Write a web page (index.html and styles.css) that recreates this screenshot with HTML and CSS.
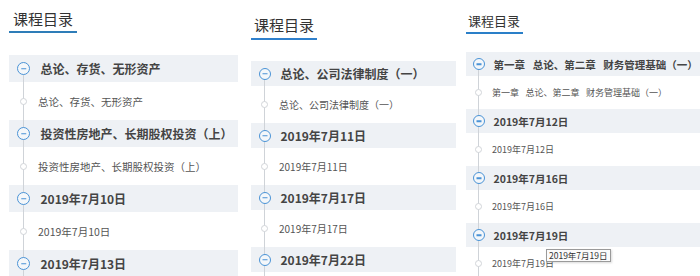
FILE: index.html
```html
<!DOCTYPE html>
<html lang="zh-CN">
<head>
    <meta charset="UTF-8">
    <meta name="viewport" content="width=device-width, initial-scale=1.0">
    <title>课程目录</title>
    <link rel="stylesheet" href="styles.css">
</head>
<body>
    <div class="page">
        <section class="toc toc-a">
            <h2 class="toc-title">课程目录</h2>
            <ul class="toc-list">
                <li class="group">
                    <div class="chapter"><span class="chapter-icon"></span><span>总论、存货、无形资产</span></div>
                    <div class="lesson"><span class="lesson-dot"></span><span>总论、存货、无形资产</span></div>
                </li>
                <li class="group">
                    <div class="chapter"><span class="chapter-icon"></span><span>投资性房地产、长期股权投资（上）</span></div>
                    <div class="lesson"><span class="lesson-dot"></span><span>投资性房地产、长期股权投资（上）</span></div>
                </li>
                <li class="group">
                    <div class="chapter"><span class="chapter-icon"></span><span>2019年7月10日</span></div>
                    <div class="lesson"><span class="lesson-dot"></span><span>2019年7月10日</span></div>
                </li>
                <li class="group">
                    <div class="chapter"><span class="chapter-icon"></span><span>2019年7月13日</span></div>
                    <div class="lesson"><span class="lesson-dot"></span><span>2019年7月13日</span></div>
                </li>
            </ul>
        </section>

        <section class="toc toc-b">
            <h2 class="toc-title">课程目录</h2>
            <ul class="toc-list">
                <li class="group">
                    <div class="chapter"><span class="chapter-icon"></span><span>总论、公司法律制度（一）</span></div>
                    <div class="lesson"><span class="lesson-dot"></span><span>总论、公司法律制度（一）</span></div>
                </li>
                <li class="group">
                    <div class="chapter"><span class="chapter-icon"></span><span>2019年7月11日</span></div>
                    <div class="lesson"><span class="lesson-dot"></span><span>2019年7月11日</span></div>
                </li>
                <li class="group">
                    <div class="chapter"><span class="chapter-icon"></span><span>2019年7月17日</span></div>
                    <div class="lesson"><span class="lesson-dot"></span><span>2019年7月17日</span></div>
                </li>
                <li class="group">
                    <div class="chapter"><span class="chapter-icon"></span><span>2019年7月22日</span></div>
                    <div class="lesson"><span class="lesson-dot"></span><span>2019年7月22日</span></div>
                </li>
            </ul>
        </section>

        <section class="toc toc-c">
            <h2 class="toc-title">课程目录</h2>
            <ul class="toc-list">
                <li class="group">
                    <div class="chapter"><span class="chapter-icon"></span><span class="keep-space">第一章&ensp; 总论、第二章&ensp; 财务管理基础（一）</span></div>
                    <div class="lesson"><span class="lesson-dot"></span><span class="keep-space">第一章&ensp; 总论、第二章&ensp; 财务管理基础（一）</span></div>
                </li>
                <li class="group">
                    <div class="chapter"><span class="chapter-icon"></span><span>2019年7月12日</span></div>
                    <div class="lesson"><span class="lesson-dot"></span><span>2019年7月12日</span></div>
                </li>
                <li class="group">
                    <div class="chapter"><span class="chapter-icon"></span><span>2019年7月16日</span></div>
                    <div class="lesson"><span class="lesson-dot"></span><span>2019年7月16日</span></div>
                </li>
                <li class="group">
                    <div class="chapter"><span class="chapter-icon"></span><span>2019年7月19日</span></div>
                    <div class="lesson"><span class="lesson-dot"></span><span>2019年7月19日</span>
                        <span class="tooltip">2019年7月19日</span>
                    </div>
                </li>
            </ul>
        </section>
    </div>
</body>
</html>
```

FILE: styles.css
```css
html, body {
    margin: 0;
    padding: 0;
    background-color: #ffffff;
}

body {
    width: 700px;
    height: 276px;
    overflow: hidden;
    font-family: "Noto Sans CJK SC", "Noto Sans", sans-serif;
    color: #444;
}

.page {
    display: flex;
    align-items: flex-start;
}

/* one column of the course outline */
.toc {
    --head-h: 27px;
    --sub-h: 38px;
    --icon-x: 14px;
    --icon-d: 13px;
    --text-x: 31px;
    --sub-x: 29px;
    --head-fs: 12px;
    --sub-fs: 10.5px;
    flex-shrink: 0;
}

.toc-title {
    display: inline-block;
    margin: 0;
    font-weight: normal;
    color: #333;
}

.toc-list {
    position: relative;
    list-style: none;
    margin: 0;
    padding: 0;
}

/* vertical timeline line */
.toc-list::before {
    content: "";
    position: absolute;
    left: var(--icon-x);
    top: calc(var(--head-h) / 2);
    bottom: 0;
    width: 1px;
    background-color: #cfd3d8;
    z-index: 1;
}

.chapter {
    display: flex;
    align-items: center;
    height: var(--head-h);
    padding-left: calc(var(--icon-x) - var(--icon-d) / 2 + 0.5px);
    background-color: #eef1f5;
    font-size: var(--head-fs);
    font-weight: bold;
    color: #444;
    white-space: nowrap;
}

.chapter-icon {
    position: relative;
    z-index: 2;
    flex-shrink: 0;
    box-sizing: border-box;
    width: var(--icon-d);
    height: var(--icon-d);
    margin-right: calc(var(--text-x) - var(--icon-x) - var(--icon-d) / 2);
    border: 1.5px solid #4a93d6;
    border-radius: 50%;
    background-color: #f4f7fa;
}

.chapter-icon::after {
    content: "";
    position: absolute;
    left: 50%;
    top: 50%;
    width: 50%;
    height: 1.5px;
    background-color: #4a93d6;
    transform: translate(-50%, -50%);
}

.lesson {
    position: relative;
    display: flex;
    align-items: center;
    height: var(--sub-h);
    padding-left: calc(var(--icon-x) - 3px);
    font-size: var(--sub-fs);
    color: #555;
    white-space: nowrap;
}

.lesson-dot {
    position: relative;
    z-index: 2;
    flex-shrink: 0;
    box-sizing: border-box;
    width: 7px;
    height: 7px;
    margin-right: calc(var(--sub-x) - var(--icon-x) - 4px);
    border: 1px solid #d2d5d9;
    border-radius: 50%;
    background-color: #ffffff;
}

.keep-space {
    white-space: pre;
}

.toc-a {
    margin-left: 9px;
    width: 229px;
}

.toc-a .toc-title {
    margin-top: 9px;
    padding: 0 4px 2px;
    font-size: 15px;
    line-height: 20px;
    border-bottom: 2px solid #2e7db8;
}

.toc-a .toc-list {
    margin-top: 22px;
}

.toc-b {
    --head-h: 25px;
    --sub-h: 37px;
    --icon-x: 13px;
    --icon-d: 12px;
    --text-x: 29px;
    --sub-x: 28px;
    --head-fs: 12px;
    --sub-fs: 10px;
    margin-left: 13px;
    width: 205px;
}

.toc-b .toc-title {
    margin-top: 15px;
    padding: 0 3px 3px;
    font-size: 15px;
    line-height: 20px;
    border-bottom: 2px solid #2f80cc;
}

.toc-b .toc-list {
    margin-top: 21px;
}

.toc-c {
    --head-h: 24px;
    --sub-h: 33px;
    --icon-x: 12px;
    --icon-d: 12px;
    --text-x: 27px;
    --sub-x: 26px;
    --head-fs: 10.5px;
    --sub-fs: 9px;
    margin-left: 10px;
    width: 234px;
}

.toc-c .toc-title {
    margin-top: 12px;
    padding: 0 3px 2px 2px;
    font-size: 13px;
    line-height: 18px;
    border-bottom: 2px solid #2a7fc8;
}

.toc-c .toc-list {
    margin-top: 18px;
}

.tooltip {
    position: absolute;
    left: 80px;
    top: 2px;
    padding: 0 2px;
    font-size: 8.5px;
    line-height: 11px;
    color: #333;
    background-color: #fbfbfb;
    border: 1px solid #9a9a9a;
    box-shadow: 1px 1px 2px rgba(0, 0, 0, 0.15);
}
```
